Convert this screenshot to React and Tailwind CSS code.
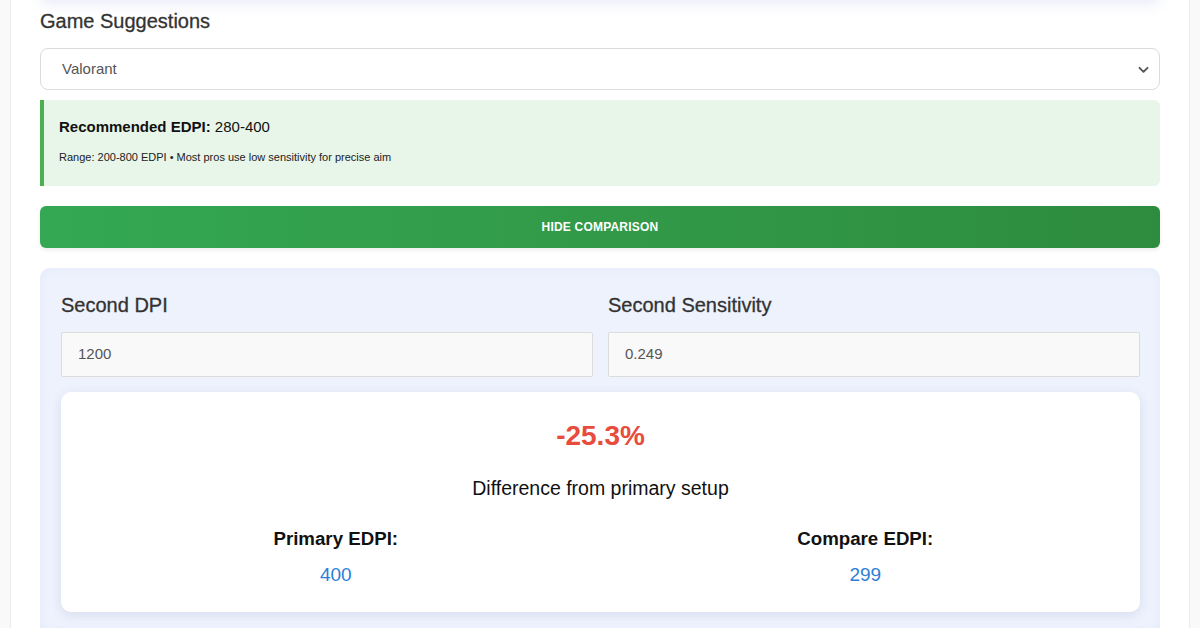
import React from "react";

export default function App() {
  const font = { fontFamily: '"Liberation Sans", Arial, sans-serif' };
  return (
    <div className="min-h-[628px] bg-[#f9f9f9] overflow-hidden" style={font}>
      <div className="mx-[10px] min-h-[640px] bg-white border-x border-[#ececec] px-[29px]">
        {/* bottom of previous section (only shadow visible) */}
        <div className="-mt-[30px] h-[30px] rounded-lg bg-white shadow-[0_4px_14px_rgba(90,110,200,0.13)]" />
        <h3 className="pt-[9px] text-[20px] leading-[24px] text-[#333] font-normal [-webkit-text-stroke:0.3px_#333]">Game Suggestions</h3>
        <div className="mt-[15px] h-[42px] rounded-[8px] border border-[#dcdcdc] bg-white flex items-center justify-between pl-[21px] pr-[10px]">
          <span className="text-[15px] text-[#555]">Valorant</span>
          <svg width="11" height="8" viewBox="0 0 11 8" className="mt-[1px]">
            <path d="M1.5 1.8 L5.5 5.8 L9.5 1.8" fill="none" stroke="#555" strokeWidth="1.9" strokeLinecap="round" strokeLinejoin="round" />
          </svg>
        </div>
        <div className="mt-[10px] h-[86px] rounded-r-[6px] border-l-[4px] border-[#4caf50] bg-[#e8f5e9] pl-[15px] pt-[16px]">
          <p className="text-[15px] leading-[22px] text-[#111]">
            <span className="font-bold">Recommended EDPI:</span> 280-400
          </p>
          <p className="mt-[11px] text-[11px] leading-[16px] text-[#222]">
            Range: 200-800 EDPI • Most pros use low sensitivity for precise aim
          </p>
        </div>
        <button className="mt-[20px] w-full h-[42px] rounded-[6px] bg-linear-to-r from-[#34a853] to-[#2e8c3e] text-white text-[12px] font-bold tracking-[0.2px] uppercase shadow-[0_2px_4px_rgba(0,0,0,0.08)]">
          Hide Comparison
        </button>
        <div className="mt-[20px] rounded-t-[10px] bg-[#eef2fd] pl-[21px] pr-[20px] pt-[25px] pb-[20px] shadow-[inset_0_0_12px_rgba(120,140,230,0.08)]">
          <div className="grid grid-cols-2 gap-x-[15px]">
            <div>
              <div className="text-[20px] leading-[24px] text-[#333] [-webkit-text-stroke:0.3px_#333]">Second DPI</div>
              <div className="mt-[15px] h-[45px] border border-[#dcdcdc] bg-[#f9f9f9] rounded-[2px] flex items-center pl-[16px] text-[15px] text-[#555]">1200</div>
            </div>
            <div>
              <div className="text-[20px] leading-[24px] text-[#333] [-webkit-text-stroke:0.3px_#333]">Second Sensitivity</div>
              <div className="mt-[15px] h-[45px] border border-[#dcdcdc] bg-[#f9f9f9] rounded-[2px] flex items-center pl-[16px] text-[15px] text-[#555]">0.249</div>
            </div>
          </div>
          <div className="mt-[15px] h-[220px] rounded-[10px] bg-white shadow-[0_3px_12px_rgba(60,70,140,0.12)] px-[20px] pt-[27px] text-center">
            <div className="text-[28px] leading-[34px] font-bold text-[#e74c3c]">-25.3%</div>
            <div className="mt-[23px] text-[19.5px] leading-[24px] text-[#111]">Difference from primary setup</div>
            <div className="mt-[27px] grid grid-cols-2 gap-x-[20px]">
              <div>
                <div className="text-[18.7px] leading-[24px] font-bold text-[#111]">Primary EDPI:</div>
                <div className="mt-[12px] text-[19px] leading-[24px] text-[#2f7ed8]">400</div>
              </div>
              <div>
                <div className="text-[18.7px] leading-[24px] font-bold text-[#111]">Compare EDPI:</div>
                <div className="mt-[12px] text-[19px] leading-[24px] text-[#2f7ed8]">299</div>
              </div>
            </div>
          </div>
        </div>
      </div>
    </div>
  );
}
